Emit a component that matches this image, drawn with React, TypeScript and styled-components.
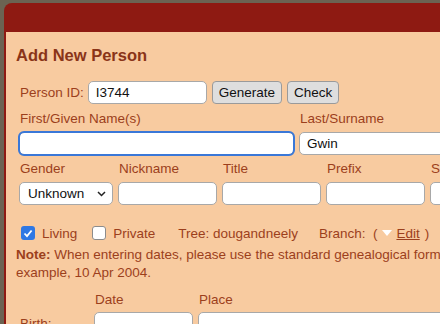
import React from "react";
import styled, { createGlobalStyle } from "styled-components";

const Global = createGlobalStyle`
  html, body {
    margin: 0;
    padding: 0;
    background: #6b6352;
    overflow: hidden;
  }
  body {
    font-family: "Liberation Sans", Arial, sans-serif;
  }
`;

const Page = styled.div`
  width: 440px;
  height: 324px;
  overflow: hidden;
  padding: 3px 0 0 4px;
  box-sizing: border-box;
`;

const Modal = styled.div`
  width: 600px;
  background: #8e1a12;
  border-radius: 8px 0 0 0;
  padding-left: 2px;
`;

const Header = styled.div`
  height: 29px;
`;

const Body = styled.div`
  background: #f8cba0;
  padding: 14px 0 40px 10px;
  color: #9c3f1c;
  font-size: 13.5px;
`;

const Title = styled.h2`
  margin: 0 0 16px 0;
  font-size: 16.5px;
  line-height: 19px;
  font-weight: bold;
  color: #8a3418;
`;

const Indent = styled.div`
  padding-left: 3px;
`;

const Row = styled.div<{ $mb?: number; $bottom?: boolean }>`
  display: flex;
  align-items: ${(p) => (p.$bottom ? "flex-end" : "center")};
  gap: 5px;
  margin-bottom: ${(p) => p.$mb ?? 0}px;
`;

const Label = styled.span`
  margin: 0 -1px 0 1px;
`;

const Field = styled.div`
  display: flex;
  flex-direction: column;
  gap: 6px;
`;

const FieldLabel = styled.span<{ $pt?: number }>`
  padding-left: 1px;
  padding-top: ${(p) => p.$pt ?? 0}px;
  line-height: 15px;
`;

const Input = styled.input<{ $w: number; $focus?: boolean }>`
  width: ${(p) => p.$w}px;
  height: 23px;
  box-sizing: border-box;
  border: 1px solid #a8a8a8;
  border-radius: 5px;
  background: #fff;
  font-family: "Liberation Sans", Arial, sans-serif;
  font-size: 13.5px;
  color: #111;
  padding: 0 7px;
  outline: ${(p) => (p.$focus ? "2px solid #3a78d8" : "none")};
  outline-offset: -1px;
  caret-color: #222;
`;

const Button = styled.button`
  height: 23px;
  box-sizing: border-box;
  border: 1px solid #9a9a9a;
  border-radius: 4px;
  background: #dedede;
  font-family: "Liberation Sans", Arial, sans-serif;
  font-size: 13.5px;
  color: #111;
  padding: 0 6px;
`;

const Select = styled.div`
  width: 94px;
  height: 23px;
  box-sizing: border-box;
  border: 1px solid #a8a8a8;
  border-radius: 5px;
  background: #fff;
  display: flex;
  align-items: center;
  justify-content: space-between;
  padding: 0 6px 0 8px;
  color: #111;
`;

const Check = styled.span<{ $on?: boolean }>`
  width: 14px;
  height: 14px;
  box-sizing: border-box;
  border-radius: 3px;
  display: inline-flex;
  align-items: center;
  justify-content: center;
  background: ${(p) => (p.$on ? "#2f78e4" : "#fff")};
  border: ${(p) => (p.$on ? "none" : "1.5px solid #8c8c8c")};
  margin-right: 7px;
`;

const CheckItem = styled.span<{ $ml?: number }>`
  display: inline-flex;
  align-items: center;
  margin-left: ${(p) => p.$ml ?? 0}px;
`;

const OptionsRow = styled.div`
  display: flex;
  align-items: center;
  padding-left: 5px;
  height: 16px;
  margin-top: 20px;
`;

const Tree = styled.span`
  margin-left: 23px;
`;

const Branch = styled.span`
  margin-left: 21px;
  display: inline-flex;
  align-items: center;
`;

const Tri = styled.span`
  display: inline-block;
  width: 0;
  height: 0;
  border-left: 5px solid transparent;
  border-right: 5px solid transparent;
  border-top: 6px solid #fff;
  margin: 0 4px 0 5px;
`;

const EditLink = styled.span`
  text-decoration: underline;
  margin-right: 5px;
`;

const Note = styled.p`
  margin: 5px 0 0 0;
  line-height: 18px;
  white-space: nowrap;
  b {
    font-weight: bold;
  }
`;

const EventGrid = styled.div`
  display: grid;
  grid-template-columns: 70px 99px 300px;
  column-gap: 5px;
  row-gap: 5px;
  margin-top: 10px;
  padding-left: 3px;
  align-items: start;
`;

const Empty = styled.span``;

export default function App() {
  return (
    <>
      <Global />
      <Page>
        <Modal>
          <Header />
          <Body>
            <Title>Add New Person</Title>
            <Indent>
              <Row $mb={7}>
                <Label>Person ID:</Label>
                <Input $w={119} defaultValue="I3744" readOnly />
                <Button>Generate</Button>
                <Button>Check</Button>
              </Row>
              <Row $mb={6} $bottom>
                <Field>
                  <FieldLabel>First/Given Name(s)</FieldLabel>
                  <Input $w={275} $focus />
                </Field>
                <Field>
                  <FieldLabel>Last/Surname</FieldLabel>
                  <Input $w={200} defaultValue="Gwin" readOnly />
                </Field>
              </Row>
              <Row $bottom>
                <Field>
                  <FieldLabel>Gender</FieldLabel>
                  <Select>
                    <span>Unknown</span>
                    <svg width="9" height="6" viewBox="0 0 9 6">
                      <path d="M1 1l3.5 3.5L8 1" fill="none" stroke="#222" strokeWidth="1.5" />
                    </svg>
                  </Select>
                </Field>
                <Field>
                  <FieldLabel>Nickname</FieldLabel>
                  <Input $w={99} readOnly />
                </Field>
                <Field>
                  <FieldLabel>Title</FieldLabel>
                  <Input $w={99} readOnly />
                </Field>
                <Field>
                  <FieldLabel>Prefix</FieldLabel>
                  <Input $w={99} readOnly />
                </Field>
                <Field>
                  <FieldLabel>Suffix</FieldLabel>
                  <Input $w={99} readOnly />
                </Field>
              </Row>
            </Indent>
            <OptionsRow>
              <CheckItem>
                <Check $on>
                  <svg width="10" height="9" viewBox="0 0 10 9">
                    <path d="M1.5 4.5l2.5 2.6L8.6 1.5" fill="none" stroke="#fff" strokeWidth="1.8" />
                  </svg>
                </Check>
                Living
              </CheckItem>
              <CheckItem $ml={15}>
                <Check />
                Private
              </CheckItem>
              <Tree>Tree: dougandneely</Tree>
              <Branch>
                Branch:&nbsp; (<Tri />
                <EditLink>Edit</EditLink>)
              </Branch>
            </OptionsRow>
            <Note>
              <b>Note:</b> When entering dates, please use the standard genealogical format. For
              <br />
              example, 10 Apr 2004.
            </Note>
            <EventGrid>
              <Empty />
              <FieldLabel>Date</FieldLabel>
              <FieldLabel>Place</FieldLabel>
              <FieldLabel $pt={4}>Birth:</FieldLabel>
              <Input $w={99} readOnly />
              <Input $w={300} readOnly />
            </EventGrid>
          </Body>
        </Modal>
      </Page>
    </>
  );
}
